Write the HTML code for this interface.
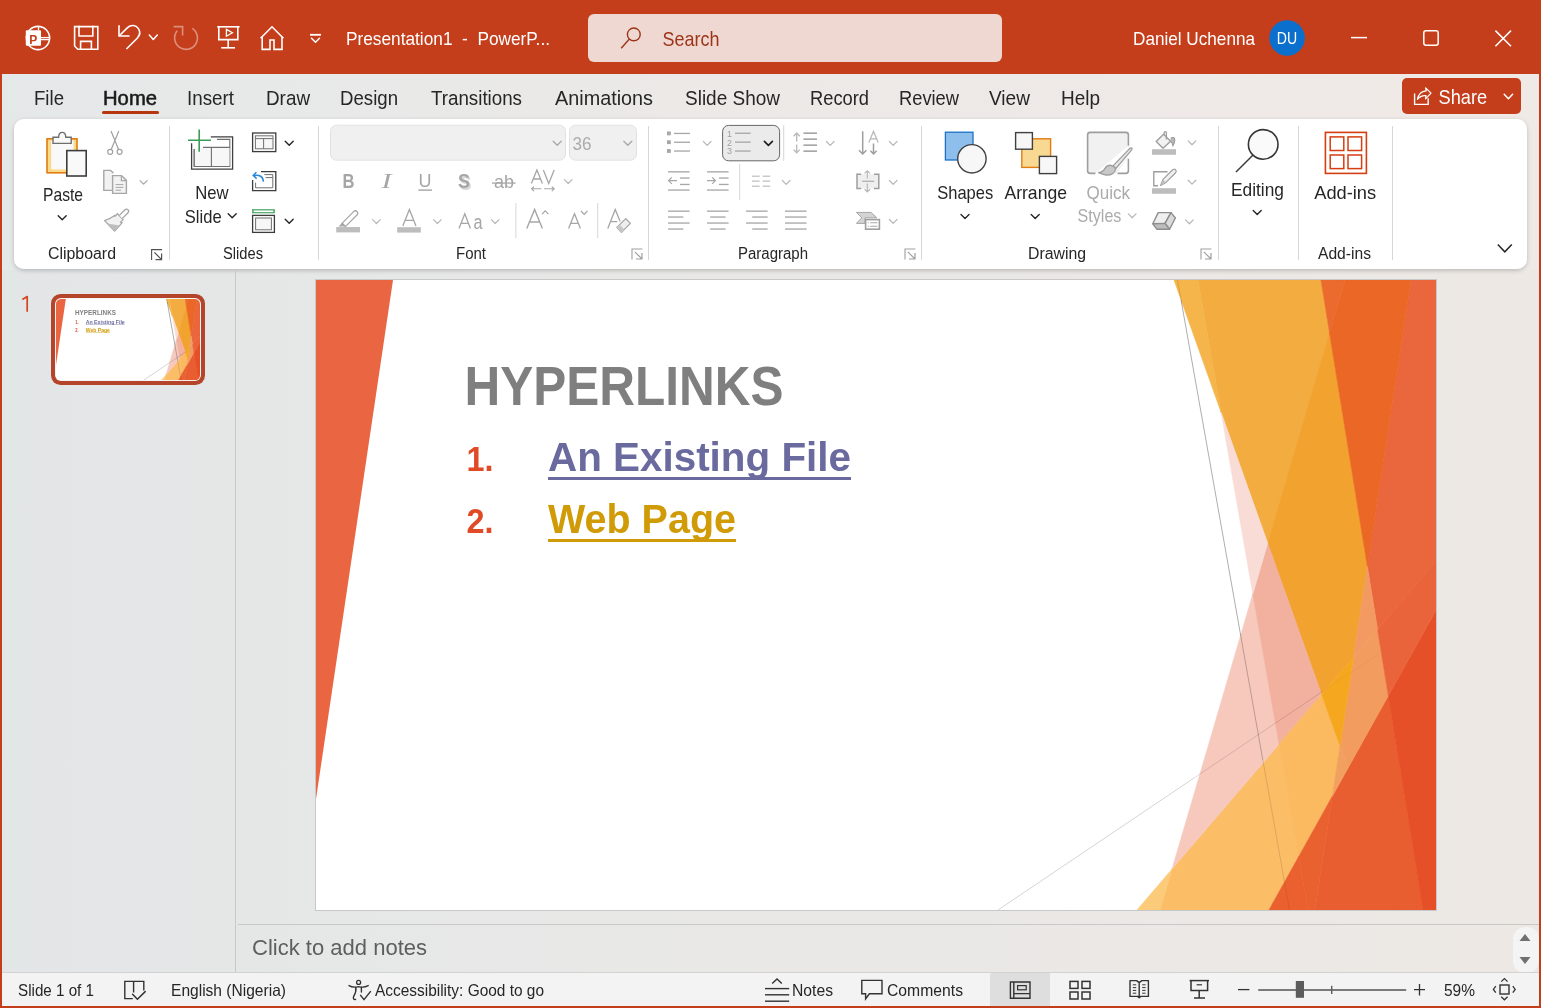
<!DOCTYPE html>
<html><head><meta charset="utf-8"><style>
html,body{margin:0;padding:0;width:1541px;height:1008px;overflow:hidden;background:#E8E8E8}
svg{display:block;will-change:transform;font-family:"Liberation Sans",sans-serif}
</style></head><body>
<svg width="1541" height="1008" viewBox="0 0 1541 1008">
<defs>
<linearGradient id="bgTabs" x1="0" y1="0" x2="1541" y2="0" gradientUnits="userSpaceOnUse"><stop offset="0" stop-color="#E5E8E9"/><stop offset="0.3" stop-color="#E9E9E8"/><stop offset="0.5" stop-color="#EDE9E6"/><stop offset="1" stop-color="#F0EAE7"/></linearGradient>
<linearGradient id="bgMain" x1="0" y1="0" x2="1541" y2="0" gradientUnits="userSpaceOnUse"><stop offset="0" stop-color="#E3E6E7"/><stop offset="0.4" stop-color="#E8E8E7"/><stop offset="0.75" stop-color="#EBE8E5"/><stop offset="1" stop-color="#EDE8E4"/></linearGradient>
<filter id="shadow" x="-2%" y="-10%" width="104%" height="125%"><feDropShadow dx="0" dy="1.5" stdDeviation="2.2" flood-color="#000" flood-opacity="0.22"/></filter>
</defs>
<rect x="0" y="0" width="1541" height="1008" fill="url(#bgMain)"/>
<rect x="0" y="74" width="1541" height="196" fill="url(#bgTabs)"/>
<rect x="0" y="0" width="1541" height="74" fill="#C43E1C"/>
<rect x="0" y="74" width="2" height="934" fill="#C43E1C"/>
<rect x="1539" y="74" width="2" height="934" fill="#C43E1C"/>
<rect x="0" y="1006" width="1541" height="2" fill="#C43E1C"/>
<text x="346" y="45" font-size="18.5" fill="#FFFFFF" textLength="204" lengthAdjust="spacingAndGlyphs">Presentation1  -  PowerP...</text>
<rect x="588" y="14" width="414" height="48" fill="#F0D8D2" rx="6"/>
<text x="662.4" y="46" font-size="20.6" fill="#9C3418" textLength="57" lengthAdjust="spacingAndGlyphs">Search</text>
<text x="1133" y="45" font-size="18.5" fill="#FFFFFF" textLength="122" lengthAdjust="spacingAndGlyphs">Daniel Uchenna</text>
<circle cx="1287.1" cy="38" r="17.8" fill="#0B6FCE"/>
<text x="1276.8" y="43.9" font-size="15.8" fill="#FFFFFF" textLength="20.4" lengthAdjust="spacingAndGlyphs">DU</text>
<text x="34" y="105" font-size="20.5" fill="#262626" textLength="30" lengthAdjust="spacingAndGlyphs">File</text>
<text x="103" y="105" font-size="20.5" fill="#1A1A1A" textLength="54" lengthAdjust="spacingAndGlyphs" stroke="#1A1A1A" stroke-width="0.55">Home</text>
<text x="187" y="105" font-size="20.5" fill="#262626" textLength="47" lengthAdjust="spacingAndGlyphs">Insert</text>
<text x="266" y="105" font-size="20.5" fill="#262626" textLength="44" lengthAdjust="spacingAndGlyphs">Draw</text>
<text x="340" y="105" font-size="20.5" fill="#262626" textLength="58" lengthAdjust="spacingAndGlyphs">Design</text>
<text x="431" y="105" font-size="20.5" fill="#262626" textLength="91" lengthAdjust="spacingAndGlyphs">Transitions</text>
<text x="555" y="105" font-size="20.5" fill="#262626" textLength="98" lengthAdjust="spacingAndGlyphs">Animations</text>
<text x="685" y="105" font-size="20.5" fill="#262626" textLength="95" lengthAdjust="spacingAndGlyphs">Slide Show</text>
<text x="810" y="105" font-size="20.5" fill="#262626" textLength="59" lengthAdjust="spacingAndGlyphs">Record</text>
<text x="899" y="105" font-size="20.5" fill="#262626" textLength="60" lengthAdjust="spacingAndGlyphs">Review</text>
<text x="989" y="105" font-size="20.5" fill="#262626" textLength="41" lengthAdjust="spacingAndGlyphs">View</text>
<text x="1061" y="105" font-size="20.5" fill="#262626" textLength="39" lengthAdjust="spacingAndGlyphs">Help</text>
<rect x="102" y="111" width="57" height="3" fill="#B7350F" rx="1.5"/>
<rect x="1402" y="78" width="119" height="36" fill="#C43E1C" rx="5"/>
<text x="1438.6" y="103.8" font-size="20.6" fill="#FFFFFF" textLength="48.6" lengthAdjust="spacingAndGlyphs">Share</text>
<rect x="14" y="119" width="1513" height="150" fill="#FFFFFF" rx="10" filter="url(#shadow)"/>
<text x="48" y="259" font-size="16" fill="#262626" textLength="68" lengthAdjust="spacingAndGlyphs">Clipboard</text>
<text x="223" y="259" font-size="16" fill="#262626" textLength="40" lengthAdjust="spacingAndGlyphs">Slides</text>
<text x="456" y="259" font-size="16" fill="#262626" textLength="30" lengthAdjust="spacingAndGlyphs">Font</text>
<text x="738" y="259" font-size="16" fill="#262626" textLength="70" lengthAdjust="spacingAndGlyphs">Paragraph</text>
<text x="1028" y="259" font-size="16" fill="#262626" textLength="58" lengthAdjust="spacingAndGlyphs">Drawing</text>
<text x="1318" y="259" font-size="16" fill="#262626" textLength="53" lengthAdjust="spacingAndGlyphs">Add-ins</text>
<rect x="169" y="126" width="1" height="134" fill="#D6D6D6"/>
<rect x="318" y="126" width="1" height="134" fill="#D6D6D6"/>
<rect x="648" y="126" width="1" height="134" fill="#D6D6D6"/>
<rect x="921" y="126" width="1" height="134" fill="#D6D6D6"/>
<rect x="1218" y="126" width="1" height="134" fill="#D6D6D6"/>
<rect x="1298" y="126" width="1" height="134" fill="#D6D6D6"/>
<rect x="1392" y="126" width="1" height="134" fill="#D6D6D6"/>
<rect x="315" y="279" width="1122" height="632" fill="#C8C8C8"/>
<g id="slc">
<rect x="316" y="280" width="1120" height="630" fill="#FFFFFF"/>
<path d="M316 280 L393 280 L316 799 Z" fill="#EA6541"/>
<clipPath id="slclip"><rect x="316" y="280" width="1120" height="630"/></clipPath>
<g clip-path="url(#slclip)">
<path d="M1221.05 412.30 L1267.71 543.37 L1329.58 332.69 L1321.04 279.95 L1197.94 279.95 Z" fill="#F3AC40" stroke="#F3AC40" stroke-width="0.5" stroke-linejoin="round" fill-rule="evenodd" vector-effect="non-scaling-stroke"/>
<path d="M1267.66 543.21 L1321.56 694.60 L1353.57 657.22 L1367.41 566.36 L1329.54 332.46 Z" fill="#F2A22E" stroke="#F2A22E" stroke-width="0.5" stroke-linejoin="round" fill-rule="evenodd" vector-effect="non-scaling-stroke"/>
<path d="M1367.31 566.36 L1377.50 629.28 L1436.05 560.92 L1436.05 279.95 L1410.96 279.95 Z" fill="#EA663D" stroke="#EA663D" stroke-width="0.5" stroke-linejoin="round" fill-rule="evenodd" vector-effect="non-scaling-stroke"/>
<path d="M1398.37 910.05 L1423.06 910.05 L1388.33 695.54 L1347.81 768.33 L1332.29 796.20 L1314.94 910.05 L1398.26 910.05 Z" fill="#E95E31" stroke="#E95E31" stroke-width="0.5" stroke-linejoin="round" fill-rule="evenodd" vector-effect="non-scaling-stroke"/>
<path d="M1171.96 869.11 L1159.93 910.05 L1269.03 910.05 L1298.74 856.68 L1279.07 744.04 Z" fill="#FBBD66" stroke="#FBBD66" stroke-width="0.5" stroke-linejoin="round" fill-rule="evenodd" vector-effect="non-scaling-stroke"/>
<path d="M1329.48 332.68 L1367.35 566.61 L1367.38 566.61 L1411.06 279.95 L1344.96 279.95 Z" fill="#EB6726" stroke="#EB6726" stroke-width="0.5" stroke-linejoin="round" fill-rule="evenodd" vector-effect="non-scaling-stroke"/>
<path d="M1252.83 593.71 L1171.89 869.34 L1279.10 744.17 Z" fill="#F7C9BD" stroke="#F7C9BD" stroke-width="0.5" stroke-linejoin="round" fill-rule="evenodd" vector-effect="non-scaling-stroke"/>
<path d="M1388.25 695.68 L1422.96 910.05 L1436.05 910.05 L1436.05 609.81 Z" fill="#E65028" stroke="#E65028" stroke-width="0.5" stroke-linejoin="round" fill-rule="evenodd" vector-effect="non-scaling-stroke"/>
<path d="M1321.63 694.51 L1267.70 543.04 L1252.76 593.93 L1279.01 744.27 Z" fill="#F2B09F" stroke="#F2B09F" stroke-width="0.5" stroke-linejoin="round" fill-rule="evenodd" vector-effect="non-scaling-stroke"/>
<path d="M1340.02 746.15 L1321.59 694.40 L1278.99 744.14 L1298.66 856.82 L1332.39 796.24 Z" fill="#FBB960" stroke="#FBB960" stroke-width="0.5" stroke-linejoin="round" fill-rule="evenodd" vector-effect="non-scaling-stroke"/>
<path d="M1339.92 746.16 L1347.85 768.45 L1388.35 695.70 L1377.56 629.05 L1353.48 657.17 Z" fill="#F39C5F" stroke="#F39C5F" stroke-width="0.5" stroke-linejoin="round" fill-rule="evenodd" vector-effect="non-scaling-stroke"/>
<path d="M1377.48 629.15 L1388.28 695.84 L1436.05 610.01 L1436.05 560.76 Z" fill="#EA643B" stroke="#EA643B" stroke-width="0.5" stroke-linejoin="round" fill-rule="evenodd" vector-effect="non-scaling-stroke"/>
<path d="M1267.76 543.20 L1221.06 412.03 L1221.01 412.05 L1252.80 594.15 Z" fill="#F9DCD5" stroke="#F9DCD5" stroke-width="0.5" stroke-linejoin="round" fill-rule="evenodd" vector-effect="non-scaling-stroke"/>
<path d="M1173.93 279.95 L1221.13 412.53 L1221.19 412.52 L1198.04 279.95 Z" fill="#F5B54B" stroke="#F5B54B" stroke-width="0.5" stroke-linejoin="round" fill-rule="evenodd" vector-effect="non-scaling-stroke"/>
<path d="M1315.04 910.05 L1332.42 795.98 L1332.41 795.98 L1298.64 856.66 L1307.96 910.05 Z" fill="#EA6130" stroke="#EA6130" stroke-width="0.5" stroke-linejoin="round" fill-rule="evenodd" vector-effect="non-scaling-stroke"/>
<path d="M1321.52 694.49 L1339.99 746.36 L1353.60 657.03 Z" fill="#F5A81F" stroke="#F5A81F" stroke-width="0.5" stroke-linejoin="round" fill-rule="evenodd" vector-effect="non-scaling-stroke"/>
<path d="M1308.06 910.05 L1298.71 856.52 L1268.91 910.05 Z" fill="#EA602F" stroke="#EA602F" stroke-width="0.5" stroke-linejoin="round" fill-rule="evenodd" vector-effect="non-scaling-stroke"/>
<path d="M1377.58 629.18 L1367.37 566.11 L1367.35 566.11 L1353.45 657.36 Z" fill="#F29A62" stroke="#F29A62" stroke-width="0.5" stroke-linejoin="round" fill-rule="evenodd" vector-effect="non-scaling-stroke"/>
<path d="M1320.94 279.95 L1329.52 332.91 L1345.07 279.95 Z" fill="#EB6A2E" stroke="#EB6A2E" stroke-width="0.5" stroke-linejoin="round" fill-rule="evenodd" vector-effect="non-scaling-stroke"/>
<path d="M1160.04 910.05 L1172.11 868.93 L1136.89 910.05 Z" fill="#FCCB7A" stroke="#FCCB7A" stroke-width="0.5" stroke-linejoin="round" fill-rule="evenodd" vector-effect="non-scaling-stroke"/>
<path d="M1347.92 768.34 L1339.95 745.95 L1332.25 796.45 L1332.26 796.46 Z" fill="#F2A05F" stroke="#F2A05F" stroke-width="0.5" stroke-linejoin="round" fill-rule="evenodd" vector-effect="non-scaling-stroke"/>
<line x1="1177.50" y1="280" x2="1181.06" y2="300" stroke="#000" stroke-opacity="0.12" stroke-width="1" vector-effect="non-scaling-stroke"/>
<line x1="1181.06" y1="300" x2="1240.79" y2="636" stroke="#000" stroke-opacity="0.32" stroke-width="1" vector-effect="non-scaling-stroke"/>
<line x1="1240.79" y1="636" x2="1262.83" y2="760" stroke="#000" stroke-opacity="0.24" stroke-width="1" vector-effect="non-scaling-stroke"/>
<line x1="1262.83" y1="760" x2="1284.52" y2="882" stroke="#000" stroke-opacity="0.12" stroke-width="1" vector-effect="non-scaling-stroke"/>
<line x1="1284.52" y1="882" x2="1289.50" y2="910" stroke="#000" stroke-opacity="0.07" stroke-width="1" vector-effect="non-scaling-stroke"/>
<line x1="998" y1="910.00" x2="1194" y2="777.99" stroke="#000" stroke-opacity="0.17" stroke-width="1" vector-effect="non-scaling-stroke"/>
<line x1="1194" y1="777.99" x2="1322" y2="691.78" stroke="#000" stroke-opacity="0.13" stroke-width="1" vector-effect="non-scaling-stroke"/>
<line x1="1322" y1="691.78" x2="1380" y2="652.72" stroke="#000" stroke-opacity="0.04" stroke-width="1" vector-effect="non-scaling-stroke"/>
</g>
<text x="464.6" y="404.6" font-size="56" fill="#7F7F7F" font-weight="bold" textLength="319" lengthAdjust="spacingAndGlyphs">HYPERLINKS</text>
<text x="466.6" y="471" font-size="35" fill="#E04A26" font-weight="bold" textLength="27" lengthAdjust="spacingAndGlyphs">1.</text>
<text x="548" y="471" font-size="41" fill="#6A6A9F" font-weight="bold" textLength="303" lengthAdjust="spacingAndGlyphs">An Existing File</text>
<rect x="548" y="477" width="303" height="3" fill="#6A6A9F"/>
<text x="466.6" y="533.4" font-size="35" fill="#E04A26" font-weight="bold" textLength="27" lengthAdjust="spacingAndGlyphs">2.</text>
<text x="548" y="533" font-size="41" fill="#D09B07" font-weight="bold" textLength="188" lengthAdjust="spacingAndGlyphs">Web Page</text>
<rect x="548" y="539" width="188" height="3" fill="#D09B07"/>
</g>
<rect x="235" y="271" width="1" height="701" fill="#C8C8C8"/>
<path d="M22.4 299.4 L27.2 296.6 V311.8" fill="none" stroke="#D4441F" stroke-width="1.7" stroke-linejoin="round"/>
<rect x="51" y="294" width="154" height="91" fill="#B5452A" rx="9.5"/>
<rect x="55" y="298" width="146" height="83" fill="#F4F4F4" rx="6"/>
<clipPath id="thclip"><rect x="316" y="280" width="1120" height="630" rx="40"/></clipPath>
<g transform="translate(55.9 299.1) scale(0.12866071428571427) translate(-316 -280)"><g clip-path="url(#thclip)"><use href="#slc"/></g></g>
<rect x="238" y="924" width="1301" height="1" fill="#C8C8C8"/>
<text x="252" y="955" font-size="22" fill="#5E5E5E" textLength="175" lengthAdjust="spacingAndGlyphs">Click to add notes</text>
<rect x="1513" y="927" width="26" height="46" fill="#F4F4F4" rx="12"/>
<path d="M1519.5 941 L1525 934 L1530.5 941 Z" fill="#707070"/>
<path d="M1519.5 957 L1525 964 L1530.5 957 Z" fill="#707070"/>
<rect x="2" y="973" width="1537" height="33" fill="#F3F3F3"/>
<rect x="2" y="972" width="1537" height="1" fill="#D2D2D2"/>
<text x="18" y="996" font-size="16.5" fill="#262626" textLength="76" lengthAdjust="spacingAndGlyphs">Slide 1 of 1</text>
<text x="171" y="996" font-size="16.5" fill="#262626" textLength="115" lengthAdjust="spacingAndGlyphs">English (Nigeria)</text>
<text x="375" y="996" font-size="16.5" fill="#262626" textLength="169" lengthAdjust="spacingAndGlyphs">Accessibility: Good to go</text>
<text x="792" y="996" font-size="16.5" fill="#262626" textLength="41" lengthAdjust="spacingAndGlyphs">Notes</text>
<text x="887" y="996" font-size="16.5" fill="#262626" textLength="76" lengthAdjust="spacingAndGlyphs">Comments</text>
<rect x="991" y="973" width="59" height="33" fill="#DCDCDC"/>
<text x="1444" y="996" font-size="16.5" fill="#262626" textLength="31" lengthAdjust="spacingAndGlyphs">59%</text>
<circle cx="38" cy="38" r="11.6" fill="none" stroke="#FFF" stroke-width="1.6"/>
<path d="M41 37.6 H49.6" fill="none" stroke="#FFFFFF" stroke-width="1.3"/>
<path d="M41 39.6 H49.6" fill="none" stroke="#FFFFFF" stroke-width="1.3"/>
<path d="M38.5 26.5 V30" fill="none" stroke="#FFFFFF" stroke-width="1.3"/>
<rect x="25.8" y="30.2" width="15.2" height="15.6" fill="#FFFFFF" rx="1"/>
<text x="29.2" y="43.6" font-size="12" fill="#C43E1C" font-weight="bold">P</text>
<path d="M74.6 26.6 H97.8 V49.2 H77.8 L74.6 46 Z" fill="none" stroke="#FFFFFF" stroke-width="1.6" stroke-linecap="square" stroke-linejoin="miter"/>
<path d="M79 26.6 V36 H92.8 V26.6" fill="none" stroke="#FFFFFF" stroke-width="1.6" stroke-linecap="square" stroke-linejoin="miter"/>
<path d="M80.6 49.2 V41.4 H91.4 V49.2" fill="none" stroke="#FFFFFF" stroke-width="1.6" stroke-linecap="square" stroke-linejoin="miter"/>
<path d="M119 26 V36 H128.8" fill="none" stroke="#FFFFFF" stroke-width="1.6" stroke-linecap="square" stroke-linejoin="miter"/>
<path d="M119.8 35.2 L127.5 27.6 C131 24.4 136 25 138.4 28.6 C140.4 31.6 139.8 35.4 137.2 38.2 L126.4 49" fill="none" stroke="#FFFFFF" stroke-width="1.6" stroke-linecap="butt"/>
<path d="M149.3 35.099999999999994 L153.3 39.5 L157.3 35.099999999999994" fill="none" stroke="#FFFFFF" stroke-width="1.5" stroke-linecap="round" stroke-linejoin="round"/>
<g opacity="0.42">
<path d="M192.2 28.4 A11.4 11.4 0 1 1 177.2 30.8" fill="none" stroke="#FFFFFF" stroke-width="1.6"/>
<path d="M174.4 26.6 H182.6 V34.8" fill="none" stroke="#FFFFFF" stroke-width="1.6" stroke-linecap="square" stroke-linejoin="miter"/>
</g>
<path d="M217.2 26.8 H239.6" fill="none" stroke="#FFFFFF" stroke-width="1.6"/>
<path d="M218.8 26.8 V39.6 H237.8 V26.8" fill="none" stroke="#FFFFFF" stroke-width="1.6" stroke-linecap="square" stroke-linejoin="miter"/>
<path d="M226.4 29.4 L232.4 32.8 L226.4 36.2 Z" fill="none" stroke="#FFFFFF" stroke-width="1.3" stroke-linecap="square" stroke-linejoin="miter"/>
<path d="M228.2 39.6 V47.8" fill="none" stroke="#FFFFFF" stroke-width="1.6"/>
<path d="M221.2 47.8 H235" fill="none" stroke="#FFFFFF" stroke-width="1.6"/>
<path d="M260.6 38.2 L272 26.8 L283.4 38.2" fill="none" stroke="#FFFFFF" stroke-width="1.6" stroke-linejoin="miter"/>
<path d="M262.2 37.2 V49.4 H270 V40 H274 V49.4 H282 V37.2" fill="none" stroke="#FFFFFF" stroke-width="1.6" stroke-linecap="square" stroke-linejoin="miter"/>
<path d="M310 34.8 H321" fill="none" stroke="#FFFFFF" stroke-width="1.8"/>
<path d="M311.5 38.3 L315.5 42.3 L319.5 38.3" fill="none" stroke="#FFFFFF" stroke-width="1.5" stroke-linecap="round" stroke-linejoin="round"/>
<path d="M1351 37.6 H1367" fill="none" stroke="#FFFFFF" stroke-width="1.5"/>
<rect x="1423.8" y="30.8" width="14.4" height="14.4" fill="none" rx="2.2" stroke="#FFF" stroke-width="1.5"/>
<path d="M1495.4 30.6 L1511 46.2 M1511 30.6 L1495.4 46.2" fill="none" stroke="#FFFFFF" stroke-width="1.5"/>
<circle cx="633.8" cy="34.4" r="6.4" fill="none" stroke="#9C3418" stroke-width="1.4"/>
<path d="M629.4 39 L621.2 48.2" fill="none" stroke="#9C3418" stroke-width="1.4"/>
<path d="M1414.6 93.4 V104.4 H1428.2 V98.2" fill="none" stroke="#FFFFFF" stroke-width="1.4" stroke-linejoin="miter"/>
<path d="M1417.4 99.4 C1418.4 94 1421.6 91.2 1426.2 90.8 L1425.6 87.8 L1431 93.2 L1425.6 98.8 L1426 95.6 C1422.4 95.2 1419.6 96.6 1417.4 99.4 Z" fill="none" stroke="#FFFFFF" stroke-width="1.2" stroke-linejoin="round"/>
<path d="M1504.2 94.2 L1508.4 98.8 L1512.6000000000001 94.2" fill="none" stroke="#FFFFFF" stroke-width="1.5" stroke-linecap="round" stroke-linejoin="round"/>
<rect x="47" y="138.8" width="30" height="34" fill="#FAD98A" stroke="#E07C12" stroke-width="1.6"/>
<rect x="51.2" y="140.4" width="22.4" height="29" fill="#F9F9F9"/>
<path d="M53 143.4 V137.2 H58.6 C58.8 133.6 60.2 132.4 62.2 132.4 C64.2 132.4 65.6 133.6 65.8 137.2 H71.2 V143.4 Z" fill="#F9F9F9" stroke="#6E6E6E" stroke-width="1.4"/>
<rect x="66.8" y="150.6" width="19.4" height="25.4" fill="#F9F9F9" stroke="#3C3C3C" stroke-width="1.6"/>
<text x="43" y="200.7" font-size="17.8" fill="#262626" textLength="40" lengthAdjust="spacingAndGlyphs">Paste</text>
<path d="M58.2 215.8 L62.2 219.8 L66.2 215.8" fill="none" stroke="#262626" stroke-width="1.4" stroke-linecap="round" stroke-linejoin="round"/>
<circle cx="110.2" cy="151.8" r="2.5" fill="none" stroke="#A0A0A0" stroke-width="1.2"/>
<circle cx="119.6" cy="151.8" r="2.5" fill="none" stroke="#A0A0A0" stroke-width="1.2"/>
<path d="M111.2 149.6 L118.8 131 M118.6 149.6 L111 131" fill="none" stroke="#A0A0A0" stroke-width="1.2"/>
<path d="M113.6 190.4 H103.8 V170.4 H110.6 L113.4 173" fill="#F2F2F2" stroke="#A6A6A6" stroke-width="1.4"/>
<path d="M112.6 175.6 H121.6 L126.4 180.4 V193.4 H112.6 Z" fill="#F2F2F2" stroke="#A6A6A6" stroke-width="1.4"/>
<path d="M121.4 175.6 V180.6 H126.4" fill="none" stroke="#A6A6A6" stroke-width="1.2"/>
<path d="M115.6 184.6 H123.4 M115.6 187.4 H123.4 M115.6 190.2 H121" fill="none" stroke="#A6A6A6" stroke-width="1"/>
<path d="M140.1 180.6 L143.6 184.20000000000002 L147.1 180.6" fill="none" stroke="#A6A6A6" stroke-width="1.2" stroke-linecap="round" stroke-linejoin="round"/>
<path d="M104.6 220.6 C108 219.4 111.6 217.6 114.6 215.4 L122 222.8 C119.6 225.6 117 228.6 114.6 231 Z" fill="#F2F2F2" stroke="#A6A6A6" stroke-width="1.3" stroke-linejoin="round"/>
<path d="M107.4 223.6 L119.4 225.6 C117.8 227.6 116.2 229.4 114.6 231 Z" fill="#BDBDBD"/>
<path d="M114.4 216.8 L117.4 213.8 L123.2 219.6 L120.2 222.6" fill="#F2F2F2" stroke="#A6A6A6" stroke-width="1.3" stroke-linejoin="round"/>
<path d="M119.4 215.4 L124.8 210 C125.8 209 127.2 209 128 209.8 C128.8 210.6 128.8 212 127.8 213 L122.4 218.4" fill="#FFFFFF" stroke="#A6A6A6" stroke-width="1.3" stroke-linejoin="round"/>
<path d="M151.6 260 V249.6 H162" fill="none" stroke="#505050" stroke-width="1.1"/>
<path d="M154.4 252.4 L161.6 259.6 M155.6 259.6 H161.6 V253.6" fill="none" stroke="#505050" stroke-width="1.2"/>
<path d="M210.8 136.8 H232.6 V169.2 H191.6 V143.2" fill="none" stroke="#404040" stroke-width="1.3"/>
<path d="M217 139.4 H229.8 V166.4 H194.2 V149" fill="none" stroke="#707070" stroke-width="1.1"/>
<rect x="194.8" y="147.8" width="34.6" height="18.2" fill="#F7F7F7"/>
<path d="M203 147.4 H229.8 M211.4 147.4 V166.4" fill="none" stroke="#707070" stroke-width="1.1"/>
<path d="M194.2 149 V166.4" fill="none" stroke="#707070" stroke-width="1.1"/>
<path d="M188 140.2 H211 M199.2 129.4 V151.8" fill="none" stroke="#3A9E58" stroke-width="1.6"/>
<text x="195.2" y="198.7" font-size="17.8" fill="#262626" textLength="33.4" lengthAdjust="spacingAndGlyphs">New</text>
<text x="184.8" y="222.6" font-size="17.8" fill="#262626" textLength="36.8" lengthAdjust="spacingAndGlyphs">Slide</text>
<path d="M228.2 213.8 L232.2 217.8 L236.2 213.8" fill="none" stroke="#262626" stroke-width="1.4" stroke-linecap="round" stroke-linejoin="round"/>
<rect x="252.6" y="133" width="23.2" height="18.6" fill="#FFFFFF" stroke="#3C3C3C" stroke-width="1.3"/>
<rect x="255.4" y="135.8" width="17.6" height="13" fill="#F7F7F7" stroke="#707070" stroke-width="1"/>
<path d="M255.4 138.6 H273 M263.6 138.6 V148.8" fill="none" stroke="#707070" stroke-width="1"/>
<path d="M285.2 141.2 L289.2 145.2 L293.2 141.2" fill="none" stroke="#262626" stroke-width="1.4" stroke-linecap="round" stroke-linejoin="round"/>
<path d="M261 171.6 H275.8 V190.6 H252.6 V180" fill="none" stroke="#3C3C3C" stroke-width="1.3"/>
<path d="M264.4 174.6 H272.8 V187.8 H255.6 V182.6" fill="none" stroke="#707070" stroke-width="1"/>
<path d="M265.6 177.6 H272.8" fill="none" stroke="#707070" stroke-width="1"/>
<path d="M263.4 181.6 C263 176.4 259.6 174.6 253.6 175.4" fill="none" stroke="#2B88D8" stroke-width="1.5"/>
<path d="M256.4 172.2 L253.2 175.4 L256.6 178.6" fill="none" stroke="#2B88D8" stroke-width="1.5"/>
<rect x="252.6" y="209.6" width="21.8" height="3.4" fill="#3A9E58" stroke="#3A9E58" stroke-width="0.6"/>
<rect x="253.6" y="210.4" width="19.8" height="1.8" fill="#FFFFFF"/>
<rect x="252.6" y="215.4" width="21.8" height="17" fill="#FFFFFF" stroke="#3C3C3C" stroke-width="1.3"/>
<rect x="255.6" y="218" width="15.8" height="11.8" fill="#F7F7F7" stroke="#707070" stroke-width="1"/>
<path d="M285.2 219.2 L289.2 223.2 L293.2 219.2" fill="none" stroke="#262626" stroke-width="1.4" stroke-linecap="round" stroke-linejoin="round"/>
<rect x="330.5" y="125.2" width="235" height="35" fill="#F0F0F0" rx="6" stroke="#E2E2E2" stroke-width="1"/>
<path d="M553.2 141.2 L557.2 145.2 L561.2 141.2" fill="none" stroke="#A8A8A8" stroke-width="1.3" stroke-linecap="round" stroke-linejoin="round"/>
<rect x="569.5" y="125.2" width="67" height="35" fill="#F0F0F0" rx="6" stroke="#E2E2E2" stroke-width="1"/>
<text x="572.4" y="149.8" font-size="18.2" fill="#ABABAB" textLength="19" lengthAdjust="spacingAndGlyphs">36</text>
<path d="M623.8 141.2 L627.8 145.2 L631.8 141.2" fill="none" stroke="#A8A8A8" stroke-width="1.3" stroke-linecap="round" stroke-linejoin="round"/>
<text x="342.4" y="187.8" font-size="19.6" fill="#A6A6A6" font-weight="bold" textLength="12" lengthAdjust="spacingAndGlyphs">B</text>
<text x="381.6" y="187.8" font-size="20" fill="#A6A6A6" font-family="Liberation Serif" textLength="10" lengthAdjust="spacingAndGlyphs" font-style="italic">I</text>
<text x="418.6" y="186.8" font-size="18.6" fill="#A6A6A6" textLength="13" lengthAdjust="spacingAndGlyphs">U</text>
<rect x="418.4" y="189.4" width="13.6" height="1.4" fill="#A6A6A6"/>
<text x="459.4" y="189.8" font-size="21" fill="#D6D6D6" font-weight="bold" textLength="12" lengthAdjust="spacingAndGlyphs">S</text>
<text x="458" y="188.2" font-size="21" fill="#A6A6A6" font-weight="bold" textLength="12" lengthAdjust="spacingAndGlyphs">S</text>
<text x="494" y="188.2" font-size="17.8" fill="#A6A6A6" textLength="20" lengthAdjust="spacingAndGlyphs">ab</text>
<rect x="492" y="182.4" width="23.6" height="1.3" fill="#A6A6A6"/>
<path d="M531.4 183.4 L536.9 170 L542.4 183.4 M533.2 179 H540.6 M543.4 170 L548.7 183.4 L554.2 170" fill="none" stroke="#A6A6A6" stroke-width="1.3" stroke-linejoin="miter"/>
<path d="M531.6 188.8 H541.4 M534 186.6 L531.6 188.8 L534 191 M544.2 188.8 H554.2 M551.8 186.6 L554.2 188.8 L551.8 191" fill="none" stroke="#A6A6A6" stroke-width="1.1"/>
<path d="M564.4000000000001 179.7 L568.2 183.5 L572.0 179.7" fill="none" stroke="#B8B8B8" stroke-width="1.2" stroke-linecap="round" stroke-linejoin="round"/>
<path d="M342 223.4 L353.6 211.6 C354.6 210.6 356 210.6 357 211.6 C358 212.6 358 214 357 215 L345.4 226.6 Z" fill="none" stroke="#A6A6A6" stroke-width="1.2" stroke-linejoin="round"/>
<path d="M342.4 222.6 L345.8 226 L343.6 226.4 H338.6 Z" fill="#A6A6A6"/>
<rect x="336.2" y="227" width="23.8" height="5.4" fill="#BDBDBD"/>
<path d="M372.59999999999997 219.7 L376.4 223.5 L380.2 219.7" fill="none" stroke="#B8B8B8" stroke-width="1.2" stroke-linecap="round" stroke-linejoin="round"/>
<path d="M402.8 226 L409.4 209.4 L416 226 M405.2 220.4 H413.6" fill="none" stroke="#A6A6A6" stroke-width="1.3"/>
<rect x="397.2" y="227.2" width="23.6" height="5.4" fill="#BDBDBD"/>
<path d="M433.59999999999997 219.7 L437.4 223.5 L441.2 219.7" fill="none" stroke="#B8B8B8" stroke-width="1.2" stroke-linecap="round" stroke-linejoin="round"/>
<path d="M459 228.6 L464.8 213.8 L470.4 228.6 M461 223.4 H468.6" fill="none" stroke="#A6A6A6" stroke-width="1.3"/>
<text x="473.6" y="228.6" font-size="20" fill="#A6A6A6" textLength="9" lengthAdjust="spacingAndGlyphs">a</text>
<path d="M491.4 219.7 L495.2 223.5 L499.0 219.7" fill="none" stroke="#B8B8B8" stroke-width="1.2" stroke-linecap="round" stroke-linejoin="round"/>
<rect x="515.4" y="203" width="1" height="35" fill="#D6D6D6"/>
<path d="M526.8 228.6 L534.6 209.4 L542.4 228.6 M529.6 222 H539.6" fill="none" stroke="#A6A6A6" stroke-width="1.4"/>
<path d="M542 214.2 L545.2 210.8 L548.4 214.2" fill="none" stroke="#A6A6A6" stroke-width="1.2"/>
<path d="M568.6 228.6 L574.5 213.8 L580.4 228.6 M570.8 223.4 H578.2" fill="none" stroke="#A6A6A6" stroke-width="1.3"/>
<path d="M581 211 L584.2 214.4 L587.4 211" fill="none" stroke="#A6A6A6" stroke-width="1.2"/>
<rect x="597.2" y="203" width="1" height="35" fill="#D6D6D6"/>
<path d="M607.8 228.6 L615.2 209.4 L620.2 221.6 M610.6 221.6 H617.4" fill="none" stroke="#A6A6A6" stroke-width="1.3"/>
<path d="M616.8 227.4 L625.8 218.6 L630.4 223.4 L621.4 232.4 Z" fill="#EFEFEF" stroke="#A6A6A6" stroke-width="1.3" stroke-linejoin="round"/>
<path d="M616.8 227.4 L619.6 224.6 L624.4 229.4 L621.4 232.4 Z" fill="#C8C8C8"/>
<path d="M632.0 259.4 V249.0 H642.4" fill="none" stroke="#A0A0A0" stroke-width="1.1"/>
<path d="M634.8 251.8 L642.0 259.0 M636.0 259.0 H642.0 V253.0" fill="none" stroke="#A0A0A0" stroke-width="1.2"/>
<rect x="667" y="131.5" width="3.8" height="3.8" fill="#A6A6A6"/>
<rect x="674" y="132.8" width="16" height="1.3" fill="#A6A6A6"/>
<rect x="667" y="140.29999999999998" width="3.8" height="3.8" fill="#A6A6A6"/>
<rect x="674" y="141.6" width="16" height="1.3" fill="#A6A6A6"/>
<rect x="667" y="149.1" width="3.8" height="3.8" fill="#A6A6A6"/>
<rect x="674" y="150.4" width="16" height="1.3" fill="#A6A6A6"/>
<path d="M703.4000000000001 141.5 L707.2 145.3 L711.0 141.5" fill="none" stroke="#B8B8B8" stroke-width="1.2" stroke-linecap="round" stroke-linejoin="round"/>
<rect x="722.6" y="125.4" width="57" height="35.4" fill="#EBEBEB" rx="6" stroke="#666666" stroke-width="1"/>
<text x="727" y="136.6" font-size="9" fill="#A0A0A0" textLength="5" lengthAdjust="spacingAndGlyphs">1</text>
<rect x="735" y="132.6" width="15.6" height="1.3" fill="#A6A6A6"/>
<text x="727" y="145.5" font-size="9" fill="#A0A0A0" textLength="5" lengthAdjust="spacingAndGlyphs">2</text>
<rect x="735" y="141.5" width="15.6" height="1.3" fill="#A6A6A6"/>
<text x="727" y="154.4" font-size="9" fill="#A0A0A0" textLength="5" lengthAdjust="spacingAndGlyphs">3</text>
<rect x="735" y="150.4" width="15.6" height="1.3" fill="#A6A6A6"/>
<path d="M764.4 141.4 L768.4 145.4 L772.4 141.4" fill="none" stroke="#1A1A1A" stroke-width="1.6" stroke-linecap="round" stroke-linejoin="round"/>
<rect x="783.2" y="125" width="1" height="36" fill="#D6D6D6"/>
<path d="M796.7 133 V141.4 M793.6 136.2 L796.7 133 L799.8 136.2 M796.7 144.4 V152.8 M793.6 149.6 L796.7 152.8 L799.8 149.6" fill="none" stroke="#B8B8B8" stroke-width="1.3"/>
<rect x="803.4" y="132.4" width="13.6" height="1.5" fill="#9E9E9E"/>
<rect x="803.4" y="138.4" width="13.6" height="1.5" fill="#9E9E9E"/>
<rect x="803.4" y="144.4" width="13.6" height="1.5" fill="#9E9E9E"/>
<rect x="803.4" y="150.4" width="13.6" height="1.5" fill="#9E9E9E"/>
<path d="M826.4000000000001 141.5 L830.2 145.3 L834.0 141.5" fill="none" stroke="#B8B8B8" stroke-width="1.2" stroke-linecap="round" stroke-linejoin="round"/>
<path d="M862.7 131.2 V154 M859 150.2 L862.7 154 L866.4 150.2" fill="none" stroke="#9E9E9E" stroke-width="1.5"/>
<path d="M868.8 142.6 L873.5 131.4 L878.2 142.6 M870.4 138.8 H876.6" fill="none" stroke="#B8B8B8" stroke-width="1.2"/>
<path d="M873.5 143.4 V154 M870.4 150.8 L873.5 154 L876.6 150.8" fill="none" stroke="#9E9E9E" stroke-width="1.5"/>
<path d="M889.4000000000001 141.5 L893.2 145.3 L897.0 141.5" fill="none" stroke="#B8B8B8" stroke-width="1.2" stroke-linecap="round" stroke-linejoin="round"/>
<rect x="668" y="171.2" width="21.6" height="1.3" fill="#A6A6A6"/>
<rect x="668" y="189.4" width="21.6" height="1.3" fill="#A6A6A6"/>
<rect x="680" y="177.4" width="9.6" height="1.3" fill="#A6A6A6"/>
<rect x="680" y="183.8" width="9.6" height="1.3" fill="#A6A6A6"/>
<path d="M677 180.6 H668.6 M671.8 177.4 L668.6 180.6 L671.8 183.8" fill="none" stroke="#A6A6A6" stroke-width="1.2"/>
<rect x="707" y="171.2" width="21.6" height="1.3" fill="#A6A6A6"/>
<rect x="707" y="189.4" width="21.6" height="1.3" fill="#A6A6A6"/>
<rect x="719" y="177.4" width="9.6" height="1.3" fill="#A6A6A6"/>
<rect x="719" y="183.8" width="9.6" height="1.3" fill="#A6A6A6"/>
<path d="M707 180.6 H715.4 M712.2 177.4 L715.4 180.6 L712.2 183.8" fill="none" stroke="#A6A6A6" stroke-width="1.2"/>
<rect x="739.2" y="164" width="1" height="36" fill="#D6D6D6"/>
<rect x="752" y="175.6" width="7.6" height="1.2" fill="#BDBDBD"/>
<rect x="762.6" y="175.6" width="7.6" height="1.2" fill="#BDBDBD"/>
<rect x="752" y="180.5" width="7.6" height="1.2" fill="#BDBDBD"/>
<rect x="762.6" y="180.5" width="7.6" height="1.2" fill="#BDBDBD"/>
<rect x="752" y="185.6" width="7.6" height="1.2" fill="#BDBDBD"/>
<rect x="762.6" y="185.6" width="7.6" height="1.2" fill="#BDBDBD"/>
<path d="M782.4000000000001 180.5 L786.2 184.3 L790.0 180.5" fill="none" stroke="#B8B8B8" stroke-width="1.2" stroke-linecap="round" stroke-linejoin="round"/>
<rect x="857" y="174.2" width="21.8" height="14.4" fill="#EFEFEF"/>
<path d="M861.2 174.2 H857 V188.6 H861.2 M874 174.2 H878.8 V188.6 H874" fill="none" stroke="#9E9E9E" stroke-width="1.5" stroke-linejoin="miter"/>
<path d="M862.2 181.3 H874.2" fill="none" stroke="#B0B0B0" stroke-width="1.3"/>
<path d="M867.3 170.8 V178.4 M864.6 173.4 L867.3 170.8 L870 173.4 M867.3 183.6 V191.8 M864.6 189.2 L867.3 191.8 L870 189.2" fill="none" stroke="#B8B8B8" stroke-width="1.2"/>
<path d="M889.4000000000001 180.5 L893.2 184.3 L897.0 180.5" fill="none" stroke="#B8B8B8" stroke-width="1.2" stroke-linecap="round" stroke-linejoin="round"/>
<rect x="668" y="210.5" width="21.6" height="1.3" fill="#A6A6A6"/>
<rect x="668" y="216.4" width="15.4" height="1.3" fill="#A6A6A6"/>
<rect x="668" y="222.4" width="21.6" height="1.3" fill="#A6A6A6"/>
<rect x="668" y="228.4" width="15.4" height="1.3" fill="#A6A6A6"/>
<rect x="707" y="210.5" width="21.6" height="1.3" fill="#A6A6A6"/>
<rect x="710.2" y="216.4" width="15.4" height="1.3" fill="#A6A6A6"/>
<rect x="707" y="222.4" width="21.6" height="1.3" fill="#A6A6A6"/>
<rect x="710.2" y="228.4" width="15.4" height="1.3" fill="#A6A6A6"/>
<rect x="746" y="210.5" width="21.6" height="1.3" fill="#A6A6A6"/>
<rect x="752.2" y="216.4" width="15.4" height="1.3" fill="#A6A6A6"/>
<rect x="746" y="222.4" width="21.6" height="1.3" fill="#A6A6A6"/>
<rect x="752.2" y="228.4" width="15.4" height="1.3" fill="#A6A6A6"/>
<rect x="785" y="210.5" width="21.6" height="1.3" fill="#A6A6A6"/>
<rect x="785" y="216.4" width="21.6" height="1.3" fill="#A6A6A6"/>
<rect x="785" y="222.4" width="21.6" height="1.3" fill="#A6A6A6"/>
<rect x="785" y="228.4" width="21.6" height="1.3" fill="#A6A6A6"/>
<path d="M856.4 212.4 H871 L876.8 217.8 H865 V223.4 H856.4 L861.8 217.8 Z" fill="#D4D4D4" stroke="#A6A6A6" stroke-width="1" stroke-linejoin="round"/>
<rect x="865.6" y="219.6" width="13.8" height="9.6" fill="#FFFFFF" stroke="#9E9E9E" stroke-width="1.6"/>
<path d="M867.8 222.8 H868.8 M870.2 222.8 H877.4 M867.8 226.2 H868.8 M870.2 226.2 H877.4" fill="none" stroke="#A6A6A6" stroke-width="1.1"/>
<path d="M889.4000000000001 219.5 L893.2 223.3 L897.0 219.5" fill="none" stroke="#B8B8B8" stroke-width="1.2" stroke-linecap="round" stroke-linejoin="round"/>
<path d="M905.0 259.4 V249.0 H915.4" fill="none" stroke="#A0A0A0" stroke-width="1.1"/>
<path d="M907.8 251.8 L915.0 259.0 M909.0 259.0 H915.0 V253.0" fill="none" stroke="#A0A0A0" stroke-width="1.2"/>
<rect x="945.4" y="132.2" width="27.6" height="27.8" fill="#8EBFEC" stroke="#1C71C6" stroke-width="1.3"/>
<circle cx="971.9" cy="158.8" r="14.2" fill="#F7F7F7" stroke="#404040" stroke-width="1.4"/>
<text x="937.2" y="198.9" font-size="17.8" fill="#262626" textLength="56" lengthAdjust="spacingAndGlyphs">Shapes</text>
<path d="M961.0 214.4 L965 218.4 L969.0 214.4" fill="none" stroke="#262626" stroke-width="1.4" stroke-linecap="round" stroke-linejoin="round"/>
<rect x="1021.8" y="138.8" width="28.8" height="28.6" fill="#F9D992" stroke="#E07C12" stroke-width="1.4"/>
<rect x="1015.6" y="132.6" width="16.8" height="16.6" fill="#F7F7F7" stroke="#404040" stroke-width="1.4"/>
<rect x="1039.4" y="156.4" width="17.2" height="17.2" fill="#F7F7F7" stroke="#404040" stroke-width="1.4"/>
<text x="1004.4" y="198.9" font-size="17.8" fill="#262626" textLength="62.6" lengthAdjust="spacingAndGlyphs">Arrange</text>
<path d="M1031.2 214.4 L1035.2 218.4 L1039.2 214.4" fill="none" stroke="#262626" stroke-width="1.4" stroke-linecap="round" stroke-linejoin="round"/>
<path d="M1128.4 145.8 V135 C1128.4 133.4 1127.4 132.4 1125.8 132.4 H1090.2 C1088.6 132.4 1087.6 133.4 1087.6 135 V170.8 C1087.6 172.4 1088.6 173.4 1090.2 173.4 H1095.4" fill="#F1F1F1" stroke="#9E9E9E" stroke-width="1.6"/>
<path d="M1117.4 173.4 H1125.8 C1127.4 173.4 1128.4 172.4 1128.4 170.8 V158.8" fill="none" stroke="#9E9E9E" stroke-width="1.6"/>
<path d="M1096 173.4 C1105 172.6 1112 167 1128.4 150 V158 C1124 162.6 1120.6 167.4 1117.4 173.4 Z" fill="#F1F1F1"/>
<path d="M1112.6 166.4 L1128.6 149.6 C1130 148.2 1131.4 147.6 1131.8 148.2 C1132.2 148.8 1131.6 150.2 1130.2 151.6 L1115.4 169" fill="none" stroke="#FFFFFF" stroke-width="3.2" stroke-linejoin="round"/>
<path d="M1112.6 166.4 L1128.6 149.6 C1130 148.2 1131.4 147.6 1131.8 148.2 C1132.2 148.8 1131.6 150.2 1130.2 151.6 L1115.4 169 Z" fill="#E8E8E8" stroke="#9E9E9E" stroke-width="1.3" stroke-linejoin="round"/>
<path d="M1115.6 169.4 C1114.8 173.4 1110.6 175.6 1106 175 C1103.4 174.8 1100.6 173.4 1098.6 172.6 C1101 172.4 1103.4 171 1104.8 168.6 C1106.4 165.8 1109.4 164.6 1112.4 165.8 C1114.4 166.6 1115.8 168 1115.6 169.4 Z" fill="#C8C8C8" stroke="#9E9E9E" stroke-width="1.3" stroke-linejoin="round"/>
<text x="1086.4" y="198.9" font-size="17.8" fill="#ABABAB" textLength="43.6" lengthAdjust="spacingAndGlyphs">Quick</text>
<text x="1077.6" y="222.4" font-size="17.8" fill="#ABABAB" textLength="43.8" lengthAdjust="spacingAndGlyphs">Styles</text>
<path d="M1128.4 213.9 L1132.2 217.70000000000002 L1136.0 213.9" fill="none" stroke="#B8B8B8" stroke-width="1.3" stroke-linecap="round" stroke-linejoin="round"/>
<path d="M1156.2 141.4 L1163.6 134.2 L1170.6 141.2 L1163 148.2 Z" fill="#F2F2F2" stroke="#9E9E9E" stroke-width="1.4" stroke-linejoin="round"/>
<path d="M1166.4 139.4 V132.6 C1166.4 131.2 1164.2 131.2 1164.2 132.6 V135" fill="none" stroke="#9E9E9E" stroke-width="1.3"/>
<path d="M1170.6 138.4 C1172.8 136.6 1174.8 137.6 1174.8 140 C1174.8 142.4 1173.8 144.4 1173 145.8 C1172.6 143.8 1171.6 141.8 1170.2 141" fill="#B8B8B8" stroke="#9E9E9E" stroke-width="1.1"/>
<rect x="1152" y="149.2" width="24" height="5.6" fill="#BDBDBD"/>
<path d="M1188.2 140.9 L1192 144.70000000000002 L1195.8 140.9" fill="none" stroke="#B8B8B8" stroke-width="1.3" stroke-linecap="round" stroke-linejoin="round"/>
<path d="M1167.6 171.8 H1153.8 V185.8 H1158" fill="none" stroke="#9E9E9E" stroke-width="1.4"/>
<path d="M1160.6 185.4 L1163 179.4 L1172.4 170 C1173.4 169 1174.8 169 1175.6 169.8 C1176.4 170.6 1176.4 172 1175.4 173 L1166 182.4 Z" fill="#F0F0F0" stroke="#9E9E9E" stroke-width="1.2" stroke-linejoin="round"/>
<path d="M1160.6 185.4 L1163 179.4 L1166 182.4 Z" fill="#BDBDBD"/>
<rect x="1152" y="188.2" width="24" height="5.6" fill="#BDBDBD"/>
<path d="M1188.2 180.29999999999998 L1192 184.1 L1195.8 180.29999999999998" fill="none" stroke="#B8B8B8" stroke-width="1.3" stroke-linecap="round" stroke-linejoin="round"/>
<path d="M1152.8 223.8 L1158.2 212.6 H1171 L1165 223.4 Z" fill="#EFEFEF" stroke="#8E8E8E" stroke-width="1.4" stroke-linejoin="round"/>
<path d="M1171 212.6 L1175.4 218 L1169.6 229.2 L1165 223.4 Z" fill="#DADADA" stroke="#8E8E8E" stroke-width="1.4" stroke-linejoin="round"/>
<path d="M1152.8 223.8 L1156.8 229.2 H1169.6 L1165 223.4 Z" fill="#BDBDBD" stroke="#8E8E8E" stroke-width="1.4" stroke-linejoin="round"/>
<path d="M1185.6000000000001 219.9 L1189.4 223.70000000000002 L1193.2 219.9" fill="none" stroke="#B8B8B8" stroke-width="1.3" stroke-linecap="round" stroke-linejoin="round"/>
<path d="M1201.0 259.4 V249.0 H1211.4" fill="none" stroke="#A0A0A0" stroke-width="1.1"/>
<path d="M1203.8000000000002 251.8 L1211.0 259.0 M1205.0 259.0 H1211.0 V253.0" fill="none" stroke="#A0A0A0" stroke-width="1.2"/>
<circle cx="1263.2" cy="144.4" r="14.8" fill="#FAFAFA" stroke="#363636" stroke-width="1.6"/>
<path d="M1252.8 155.2 L1236 172" fill="none" stroke="#3C3C3C" stroke-width="1.5"/>
<text x="1231" y="195.9" font-size="17.8" fill="#262626" textLength="53" lengthAdjust="spacingAndGlyphs">Editing</text>
<path d="M1253.2 210.6 L1257.2 214.6 L1261.2 210.6" fill="none" stroke="#262626" stroke-width="1.4" stroke-linecap="round" stroke-linejoin="round"/>
<rect x="1325.4" y="132.4" width="41" height="41" fill="#FFFFFF" stroke="#D53E10" stroke-width="1.6"/>
<rect x="1330.2" y="136.9" width="13.6" height="13.6" fill="#FFFFFF" stroke="#D53E10" stroke-width="1.5"/>
<rect x="1330.2" y="155" width="13.6" height="13.6" fill="#FFFFFF" stroke="#D53E10" stroke-width="1.5"/>
<rect x="1348" y="136.9" width="13.6" height="13.6" fill="#FFFFFF" stroke="#D53E10" stroke-width="1.5"/>
<rect x="1348" y="155" width="13.6" height="13.6" fill="#FFFFFF" stroke="#D53E10" stroke-width="1.5"/>
<text x="1314.2" y="198.5" font-size="17.8" fill="#262626" textLength="62" lengthAdjust="spacingAndGlyphs">Add-ins</text>
<path d="M1497.8 244.6 L1504.8 251.8 L1511.8 244.6" fill="none" stroke="#262626" stroke-width="1.5"/>
<path d="M132.8 998.6 H124.8 V981.4 H143.8 V990.6 M133.6 981.4 V992.6" fill="none" stroke="#333333" stroke-width="1.4" stroke-linejoin="miter"/>
<path d="M132.6 994.2 L137.4 999.2 L145.2 991.6" fill="none" stroke="#333333" stroke-width="1.5" stroke-linejoin="round" stroke-linecap="round"/>
<circle cx="358.6" cy="982.4" r="2" fill="none" stroke="#333" stroke-width="1.3"/>
<path d="M349 985.6 C352 987.4 355 987.6 358.6 986.6 C362 987.6 365 987.4 368.2 985.6" fill="none" stroke="#333333" stroke-width="1.4" stroke-linejoin="round" stroke-linecap="round"/>
<path d="M355.8 987.4 C356.4 991 355.2 994 353.6 996.6 C352.8 998.2 353.8 1000 355.6 999.4" fill="none" stroke="#333333" stroke-width="1.4" stroke-linejoin="round" stroke-linecap="round"/>
<path d="M361.4 987.4 V992" fill="none" stroke="#333333" stroke-width="1.4" stroke-linejoin="round" stroke-linecap="round"/>
<path d="M360.6 995.4 L364 999.6 L370.4 991.6" fill="none" stroke="#333333" stroke-width="1.5" stroke-linejoin="round" stroke-linecap="round"/>
<rect x="765" y="987.9" width="24.2" height="1.4" fill="#333333"/>
<rect x="765" y="994.0999999999999" width="24.2" height="1.4" fill="#333333"/>
<rect x="765" y="1000.5" width="24.2" height="1.4" fill="#333333"/>
<path d="M772.2 983.6 L777 979 L781.8 983.6" fill="none" stroke="#333333" stroke-width="1.4"/>
<path d="M861.8 980.4 H882 V993.8 H869.4 L865.6 998.8 V993.8 H861.8 Z" fill="none" stroke="#333333" stroke-width="1.4" stroke-linejoin="miter"/>
<rect x="990" y="974" width="60" height="32" fill="#DEDEDE"/>
<path d="M1010.4 982 H1030 V998.2 H1010.4 Z M1013.8 982 V998.2 M1013.8 993.6 H1030" fill="none" stroke="#333333" stroke-width="1.4"/>
<rect x="1017.6" y="985.6" width="8.6" height="4.2" fill="none" stroke="#333" stroke-width="1.2"/>
<rect x="1070" y="981.4" width="8" height="7" fill="none" stroke="#333" stroke-width="1.5"/>
<rect x="1070" y="992" width="8" height="7" fill="none" stroke="#333" stroke-width="1.5"/>
<rect x="1082" y="981.4" width="8" height="7" fill="none" stroke="#333" stroke-width="1.5"/>
<rect x="1082" y="992" width="8" height="7" fill="none" stroke="#333" stroke-width="1.5"/>
<path d="M1139.2 997.8 L1137.6 996.4 H1130 V980.6 H1136.6 L1139.2 982.6 L1141.8 980.6 H1148.4 V996.4 H1140.8 Z M1139.2 982.6 V997.4" fill="none" stroke="#333333" stroke-width="1.4" stroke-linejoin="round"/>
<path d="M1132.8 984.8 H1136.2 M1142.2 984.8 H1145.6" fill="none" stroke="#333333" stroke-width="1"/>
<path d="M1132.8 987.6 H1136.2 M1142.2 987.6 H1145.6" fill="none" stroke="#333333" stroke-width="1"/>
<path d="M1132.8 990.4 H1136.2 M1142.2 990.4 H1145.6" fill="none" stroke="#333333" stroke-width="1"/>
<path d="M1132.8 993.2 H1136.2 M1142.2 993.2 H1145.6" fill="none" stroke="#333333" stroke-width="1"/>
<path d="M1189.6 980.6 H1209" fill="none" stroke="#333333" stroke-width="1.5"/>
<path d="M1191 980.6 V990.4 H1207.6 V980.6" fill="none" stroke="#333333" stroke-width="1.5"/>
<path d="M1196.6 984.8 H1202" fill="none" stroke="#333333" stroke-width="1.2"/>
<path d="M1199.2 990.4 V998 M1194 998 H1205" fill="none" stroke="#333333" stroke-width="1.5"/>
<path d="M1238 989.6 H1249.4" fill="none" stroke="#333333" stroke-width="1.3"/>
<rect x="1258.2" y="989.2" width="148" height="1.6" fill="#5C5C5C"/>
<rect x="1295.8" y="981" width="8.2" height="16.8" fill="#5C5C5C"/>
<rect x="1331" y="985.8" width="1.4" height="8.2" fill="#5C5C5C"/>
<path d="M1414 989.6 H1425 M1419.5 984 V995.4" fill="none" stroke="#333333" stroke-width="1.3"/>
<rect x="1500" y="985" width="9" height="9" fill="none" stroke="#333" stroke-width="1.4"/>
<path d="M1495.8 986.2 L1493.4 989.4 L1495.8 992.6 M1512.8 986.2 L1515.2 989.4 L1512.8 992.6 M1501.2 981.6 L1504.4 978.6 L1507.6 981.6 M1501.2 996.8 L1504.4 999.8 L1507.6 996.8" fill="none" stroke="#333333" stroke-width="1.3"/>
</svg></body></html>
